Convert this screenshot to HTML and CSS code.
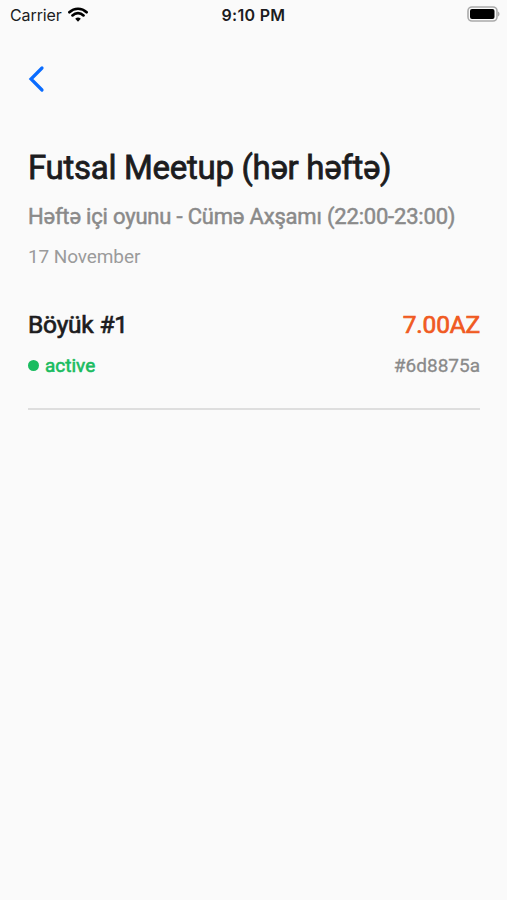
FILE: index.html
```html
<!DOCTYPE html>
<html lang="az">
<head>
<meta charset="utf-8">
<title>Futsal Meetup</title>
<link rel="stylesheet" href="styles.css">
</head>
<body>
<header class="status">
  <div class="carrier"><span class="carrier-name">Carrier</span>
    <svg class="wifi" viewBox="0 0 20 15" width="20" height="15"><path d="M1.4 5.2a12.4 12.4 0 0 1 17.2 0M4.5 8.4a8 8 0 0 1 11 0"/><path class="dot" d="M7.2 11.7a4.2 4.2 0 0 1 5.6 0L10 14.7z"/></svg>
  </div>
  <div class="time">9:10 PM</div>
  <svg class="battery" viewBox="0 0 33 16" width="33" height="16"><rect x="1" y="1" width="29" height="14" rx="4"/><rect class="charge" x="3" y="3" width="24.5" height="10" rx="2"/><path class="tip" d="M31 5.5c2 .8 2 4.2 0 5z"/></svg>
</header>
<main>
  <a class="back" href="#" aria-label="Back"><svg viewBox="0 0 18 28" width="18" height="28"><path d="M14 3L3 14l11 11"/></svg></a>
  <h1>Futsal Meetup (hər həftə)</h1>
  <h2>Həftə içi oyunu - Cümə Axşamı (22:00-23:00)</h2>
  <p class="date">17 November</p>
  <section class="order">
    <div class="row top"><span class="name">Böyük #1</span><span class="price">7.00AZ</span></div>
    <div class="row bottom"><span class="state">active</span><span class="code">#6d8875a</span></div>
  </section>
</main>
</body>
</html>
```
FILE: styles.css
```css
* { box-sizing: border-box; }
body { margin: 0; min-height: 900px; background: #fafafa; color: #1c1c1e; font-family: Roboto, "Liberation Sans", sans-serif; }
.status { display: grid; grid-template-columns: 1fr auto 1fr; align-items: center; height: 30px; padding: 0 7px 0 10px; font: 16px/30px Inter, sans-serif; }
.carrier { display: flex; align-items: center; gap: 6px; }
.carrier-name { letter-spacing: -.1px; }
.wifi { margin-top: -2px; fill: none; stroke: #000; stroke-width: 2.7; stroke-linecap: round; }
.wifi .dot { fill: #000; stroke: none; }
.time { margin-right: 3px; font-weight: 600; letter-spacing: .3px; }
.battery { justify-self: end; margin-top: -2px; fill: none; stroke: #aaa; stroke-width: 1.6; }
.battery .charge { fill: #000; stroke: none; }
.battery .tip { fill: #aaa; stroke: none; }
main { padding: 35px 27px 0 28px; }
.back { display: block; height: 28px; }
.back svg { display: block; fill: none; stroke: #0a6cff; stroke-width: 3.2; stroke-linecap: round; }
h1, h2, p { margin: 0; white-space: nowrap; }
h1 { margin-top: 55px; font-size: 33px; line-height: 40px; font-weight: 400; letter-spacing: -.29px; -webkit-text-stroke: .8px; }
h2 { margin-top: 15px; font-size: 22px; line-height: 28px; font-weight: 400; letter-spacing: -.19px; color: #8a8a8a; -webkit-text-stroke: .5px; }
.date { margin-top: 12px; font-size: 19px; line-height: 28px; letter-spacing: -.1px; color: #9b9b9b; }
.order { height: 110px; margin-top: 29px; border-bottom: 2px solid #dedede; }
.row { display: flex; justify-content: space-between; align-items: center; }
.top { height: 48px; font-size: 24.5px; letter-spacing: -.2px; -webkit-text-stroke: .7px; }
.price { color: #f05a22; }
.bottom { height: 35px; font-size: 19px; color: #8a8a8a; -webkit-text-stroke: .3px; }
.state { display: flex; align-items: center; gap: 6px; color: #1abc60; -webkit-text-stroke: .6px; }
.state::before { content: ""; width: 11px; height: 11px; border-radius: 50%; background: currentColor; }
```
